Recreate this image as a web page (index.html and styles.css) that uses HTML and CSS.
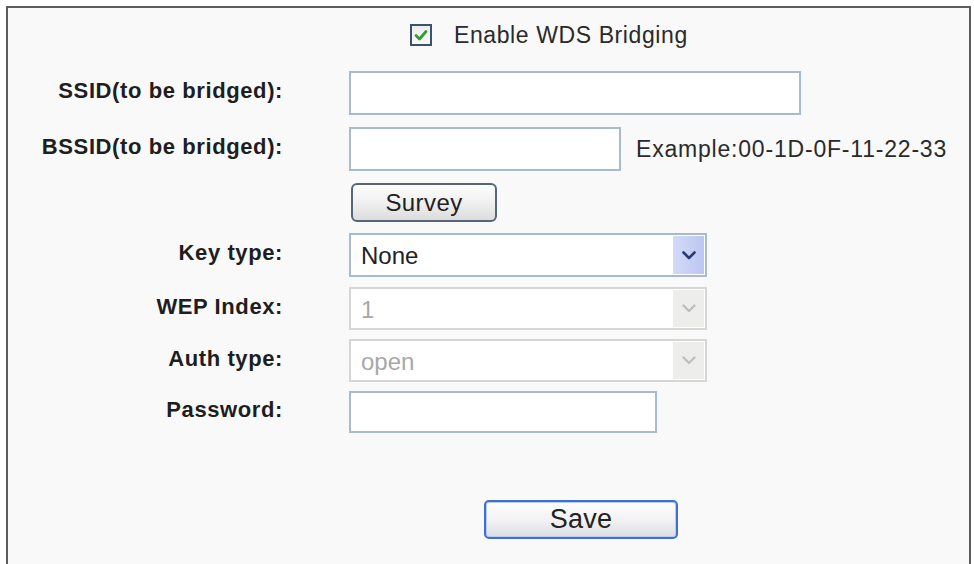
FILE: index.html
```html
<!DOCTYPE html>
<html>
<head>
<meta charset="utf-8">
<link rel="stylesheet" href="styles.css">
</head>
<body>
<div class="frame">
  <div class="row row-head">
    <div class="label"></div>
    <div class="control check-ctl">
      <span class="checkbox">
        <svg width="14" height="12" viewBox="0 0 14 12"><path d="M2 6.5 L5.5 10 L12 2.5" fill="none" stroke="#2f9e34" stroke-width="2.8" stroke-linecap="round" stroke-linejoin="round"/></svg>
      </span>
      <span class="check-text">Enable WDS Bridging</span>
    </div>
  </div>
  <div class="row row-ssid">
    <div class="label">SSID(to be bridged):</div>
    <div class="control"><input class="field field-ssid" type="text"></div>
  </div>
  <div class="row row-bssid">
    <div class="label">BSSID(to be bridged):</div>
    <div class="control"><input class="field field-bssid" type="text"><span class="hint">Example:00-1D-0F-11-22-33</span></div>
  </div>
  <div class="row row-survey">
    <div class="label"></div>
    <div class="control"><button class="btn btn-survey">Survey</button></div>
  </div>
  <div class="row row-key">
    <div class="label">Key type:</div>
    <div class="control">
      <div class="select">
        <span class="select-value">None</span>
        <span class="select-arrow">
          <svg width="14" height="9" viewBox="0 0 14 9"><path d="M1.5 1.5 L7 7 L12.5 1.5" fill="none" stroke="#283a6e" stroke-width="2.6" stroke-linecap="round" stroke-linejoin="round"/></svg>
        </span>
      </div>
    </div>
  </div>
  <div class="row row-wep">
    <div class="label">WEP Index:</div>
    <div class="control">
      <div class="select disabled">
        <span class="select-value">1</span>
        <span class="select-arrow">
          <svg width="14" height="9" viewBox="0 0 14 9"><path d="M1.5 1.5 L7 7 L12.5 1.5" fill="none" stroke="#bdbdbd" stroke-width="2.2" stroke-linecap="round" stroke-linejoin="round"/></svg>
        </span>
      </div>
    </div>
  </div>
  <div class="row row-auth">
    <div class="label">Auth type:</div>
    <div class="control">
      <div class="select disabled">
        <span class="select-value">open</span>
        <span class="select-arrow">
          <svg width="14" height="9" viewBox="0 0 14 9"><path d="M1.5 1.5 L7 7 L12.5 1.5" fill="none" stroke="#bdbdbd" stroke-width="2.2" stroke-linecap="round" stroke-linejoin="round"/></svg>
        </span>
      </div>
    </div>
  </div>
  <div class="row row-pass">
    <div class="label">Password:</div>
    <div class="control"><input class="field field-pass" type="text"></div>
  </div>
  <div class="row row-save">
    <div class="label"></div>
    <div class="control save-ctl"><button class="btn btn-save">Save</button></div>
  </div>
</div>
</body>
</html>
```

FILE: styles.css
```css
html, body {
  margin: 0;
  padding: 0;
  background: #ffffff;
}
body {
  font-family: "Liberation Sans", Arial, sans-serif;
  color: #222;
  overflow: hidden;
}
.frame {
  margin: 6px 3px 0 6px;
  border: 2px solid #5c5c5c;
  border-bottom: none;
  background: #f9f9f9;
  height: 620px;
  box-sizing: border-box;
  display: flex;
  flex-direction: column;
}
.row {
  display: flex;
  align-items: center;
  column-gap: 66px;
}
.label {
  width: 275px;
  flex: none;
  text-align: right;
  font-weight: bold;
  font-size: 22px;
  letter-spacing: 0.6px;
  color: #1e1e1e;
  padding-bottom: 4px;
}
.control {
  display: flex;
  align-items: center;
}
.row-head { margin-top: 16px; height: 22px; }
.check-ctl { padding-left: 61px; }
.checkbox {
  width: 18px;
  height: 18px;
  border: 2px solid #3c5170;
  background: linear-gradient(#ececec, #fafafa);
  display: flex;
  align-items: center;
  justify-content: center;
}
.check-text {
  margin-left: 22px;
  font-size: 23px;
  letter-spacing: 0.6px;
  color: #2a2a2a;
}
.row-ssid { margin-top: 25px; }
.row-bssid { margin-top: 12px; }
.row-survey { margin-top: 12px; }
.row-key { margin-top: 11px; }
.row-wep { margin-top: 10px; }
.row-auth { margin-top: 9px; }
.row-pass { margin-top: 9px; }
.row-save { margin-top: 67px; }
.field {
  box-sizing: border-box;
  height: 44px;
  border: 2px solid #a9bacd;
  background: #ffffff;
  margin: 0;
  padding: 0 8px;
  outline: none;
}
.field-ssid { width: 452px; }
.field-bssid { width: 272px; }
.field-pass { width: 308px; height: 42px; }
.hint {
  margin-left: 15px;
  font-size: 23px;
  letter-spacing: 0.8px;
  color: #2a2a2a;
}
.btn {
  box-sizing: border-box;
  font-family: "Liberation Sans", Arial, sans-serif;
  color: #222;
  margin: 0;
  padding: 0;
  cursor: pointer;
}
.btn-survey {
  margin-left: 2px;
  width: 146px;
  height: 39px;
  border: 2px solid #56657a;
  border-radius: 6px;
  background: linear-gradient(#fdfdfd, #f0f0f0 50%, #dcdcdc);
  font-size: 24px;
  letter-spacing: 0.4px;
}
.select {
  position: relative;
  box-sizing: border-box;
  width: 358px;
  height: 44px;
  border: 2px solid #a9bacd;
  background: #ffffff;
  display: flex;
  align-items: center;
  font-size: 24px;
  color: #222;
}
.row-wep .select, .row-auth .select { height: 43px; }
.select-value { padding-left: 10px; padding-top: 2px; }
.select-arrow {
  position: absolute;
  top: 1px;
  bottom: 1px;
  right: 1px;
  width: 31px;
  background: linear-gradient(90deg, #d3daf8, #bcc6f2);
  display: flex;
  align-items: center;
  justify-content: center;
}
.select.disabled {
  border-color: #d6d6d4;
  color: #a8a8a8;
}
.select.disabled .select-arrow {
  background: #ededeb;
}
.save-ctl { padding-left: 135px; }
.btn-save {
  width: 194px;
  height: 39px;
  border: 2px solid #3f6fd0;
  border-radius: 5px;
  background: linear-gradient(#ffffff, #f1f1f1 55%, #dadde6);
  box-shadow: inset 0 0 0 1px #b9cbef;
  font-size: 27px;
  letter-spacing: 0.2px;
}
```
